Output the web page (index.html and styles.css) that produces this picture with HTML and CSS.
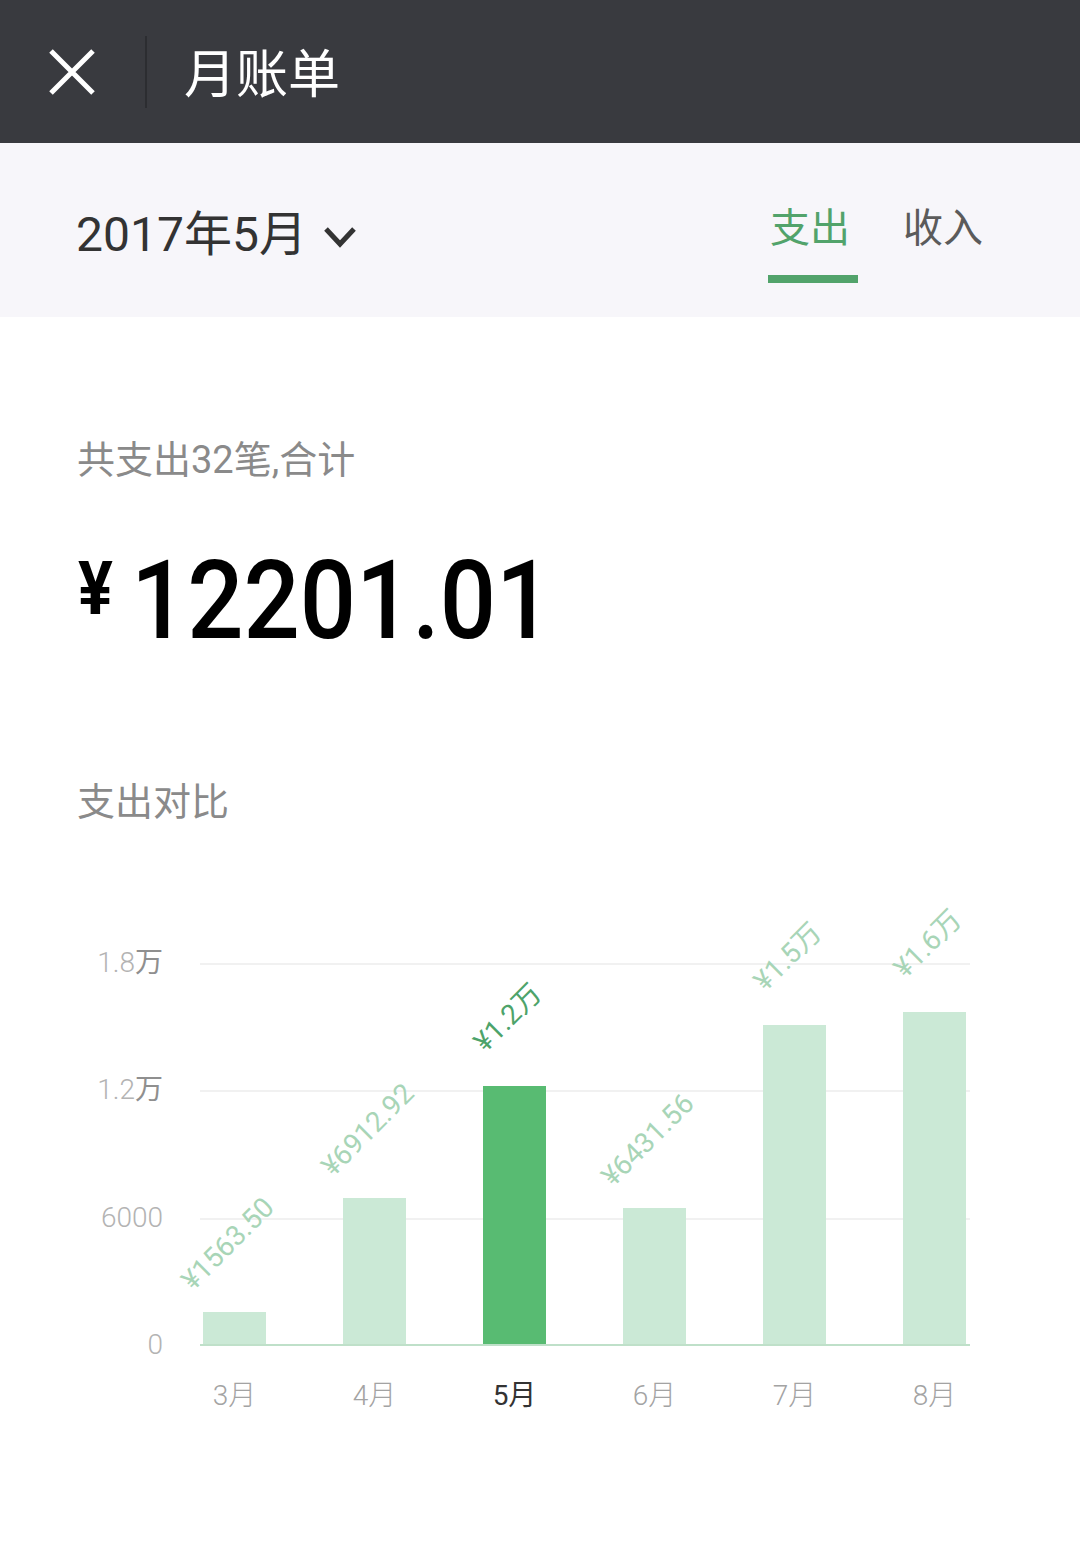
FILE: index.html
```html
<!DOCTYPE html>
<html lang="zh-CN">
<head>
<meta charset="utf-8">
<title>月账单</title>
<link rel="stylesheet" href="styles.css">
</head>
<body>
<header class="topbar">
  <svg class="close" width="48" height="48" viewBox="0 0 48 48"><path d="M3 3 L45 45 M45 3 L3 45" stroke="#fff" stroke-width="5" fill="none"/></svg>
  <span class="divider"></span>
  <h1 class="title">月账单</h1>
</header>
<div class="subbar">
  <div class="date">2017年5月<svg class="chev" width="34" height="24" viewBox="0 0 34 24"><polyline points="3,4 17,19 31,4" fill="none" stroke="#333" stroke-width="5"/></svg></div>
  <div class="tabs">
    <div class="tab active"><span class="tab-text">支出</span><span class="tab-line"></span></div>
    <div class="tab"><span class="tab-text">收入</span></div>
  </div>
</div>
<main class="content">
  <div class="summary">共支出32笔,合计</div>
  <div class="amount"><span class="yen">¥</span><span class="num">12201.01</span></div>
  <div class="section-title">支出对比</div>
  <div class="chart">
    <div class="yaxis">
      <div class="ylab"><span>1.8<em>万</em></span></div>
      <div class="ylab"><span>1.2<em>万</em></span></div>
      <div class="ylab"><span>6000</span></div>
      <div class="ylab"><span>0</span></div>
    </div>
    <div class="plot">
      <div class="bar" style="height:32px"><span class="val">¥1563.50</span></div>
      <div class="bar" style="height:146px"><span class="val">¥6912.92</span></div>
      <div class="bar active" style="height:258px"><span class="val">¥1.2万</span></div>
      <div class="bar" style="height:136px"><span class="val">¥6431.56</span></div>
      <div class="bar" style="height:319px"><span class="val">¥1.5万</span></div>
      <div class="bar" style="height:332px"><span class="val">¥1.6万</span></div>
    </div>
  </div>
  <div class="months">
    <span class="month">3月</span>
    <span class="month">4月</span>
    <span class="month active">5月</span>
    <span class="month">6月</span>
    <span class="month">7月</span>
    <span class="month">8月</span>
  </div>
</main>
</body>
</html>
```
FILE: styles.css
```css
* { box-sizing: border-box; }
html, body { margin: 0; padding: 0; background: #fff; }
body {
  font-family: Roboto, "Noto Sans CJK SC", sans-serif;
  width: 1080px;
  min-height: 1549px;
  color: #333;
}
.topbar {
  height: 143px;
  background: #393a3f;
  display: flex;
  align-items: center;
  padding-left: 48px;
}
.close { display: block; flex: none; }
.divider {
  width: 2px;
  height: 72px;
  background: #2c2d31;
  margin-left: 49px;
  flex: none;
}
.title {
  margin: 8px 0 0 37px;
  font-size: 52px;
  line-height: 52px;
  font-weight: 400;
  color: #fff;
}
.subbar {
  height: 174px;
  background: #f7f6fa;
  display: flex;
  justify-content: space-between;
  align-items: flex-start;
  padding: 0 97px 0 76px;
}
.date {
  margin-top: 68px;
  font-size: 48px;
  line-height: 48px;
  color: #333;
  display: flex;
  align-items: center;
}
.chev { margin-left: 16px; margin-top: 4px; display: block; }
.tabs {
  display: flex;
  align-items: flex-start;
  gap: 45px;
  padding-top: 66px;
}
.tab {
  display: flex;
  flex-direction: column;
  font-size: 40px;
  line-height: 40px;
  color: #5b5b5b;
}
.tab.active { color: #52a36b; width: 90px; }
.tab.active .tab-text { padding-left: 2px; }
.tab-line {
  display: block;
  width: 90px;
  height: 8px;
  background: #52a36b;
  margin-top: 26px;
}
.content { padding-left: 77px; }
.summary {
  margin-top: 124px;
  font-size: 38px;
  line-height: 38px;
  color: #8a8a8a;
}
.amount {
  margin-top: 67px;
  display: flex;
  align-items: flex-start;
  color: #000;
}
.yen {
  font-size: 74px;
  line-height: 74px;
  font-weight: 700;
  margin-top: 6px;
  margin-left: 1px;
  transform: scaleX(0.88);
  transform-origin: left center;
}
.num {
  font-size: 110px;
  line-height: 110px;
  font-weight: 500;
  margin-left: 13px;
  transform: scaleX(0.9);
  transform-origin: left center;
}
.section-title {
  margin-top: 127px;
  font-size: 38px;
  line-height: 38px;
  color: #8a8a8a;
}
.chart {
  margin-top: 142px;
  display: flex;
  height: 383px;
}
.yaxis {
  width: 86px;
  flex: none;
  display: flex;
  flex-direction: column;
  justify-content: space-between;
  height: 382px;
}
.ylab {
  height: 0;
  display: flex;
  align-items: center;
  justify-content: flex-end;
  font-size: 28px;
  line-height: 28px;
  font-weight: 300;
  color: #b3b3b3;
}
.ylab em { font-style: normal; color: #8f8f8f; font-weight: 400; }
.plot {
  margin-left: 37px;
  width: 770px;
  height: 383px;
  display: flex;
  align-items: flex-end;
  gap: 77px;
  padding-left: 3px;
  border-bottom: 2px solid #bfe0c9;
  background: repeating-linear-gradient(to bottom, #f1f1f1 0, #f1f1f1 2px, transparent 2px, transparent 127.33px);
}
.bar {
  position: relative;
  width: 63px;
  flex: none;
  background: #cbe9d6;
}
.bar.active { background: #58bb72; }
.val {
  position: absolute;
  left: 50%;
  bottom: 100%;
  white-space: nowrap;
  font-size: 28px;
  line-height: 28px;
  color: #a8d5b7;
  transform: translate(-50%, 50%) translate(-7px, -68px) rotate(-45deg);
}
.bar.active .val { color: #4da36a; }
.months {
  margin-top: 36px;
  margin-left: 123px;
  padding-left: 3px;
  display: flex;
  gap: 77px;
}
.month {
  width: 63px;
  text-align: center;
  font-size: 28px;
  line-height: 28px;
  font-weight: 300;
  color: #a3a3a3;
}
.month.active { color: #333; font-weight: 400; }
```
